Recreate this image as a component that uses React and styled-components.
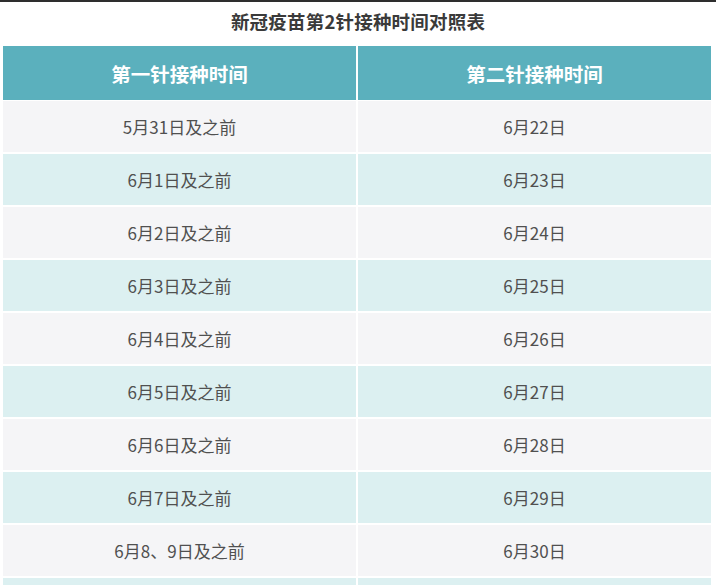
import React from "react";
import styled, { createGlobalStyle } from "styled-components";

const Global = createGlobalStyle`
  html, body { margin: 0; padding: 0; background: #ffffff; }
  body { font-family: "Noto Sans CJK SC", "Noto Sans", sans-serif; }
`;

const Page = styled.div`
  width: 716px;
  height: 585px;
  overflow: hidden;
  background: #ffffff;
  display: flex;
  flex-direction: column;
`;

const TopBar = styled.div`
  height: 2px;
  background: #2e2e2e;
  flex: none;
`;

const Title = styled.h1`
  margin: 0;
  height: 38px;
  padding-bottom: 6px;
  flex: none;
  display: flex;
  align-items: center;
  justify-content: center;
  font-size: 18.5px;
  font-weight: 700;
  color: #3a3a3a;
  letter-spacing: 0.2px;
`;

const Table = styled.div`
  margin: 0 5px 0 3px;
  display: grid;
  grid-template-columns: 1fr 1fr;
  column-gap: 2px;
  row-gap: 2px;
`;

const HeadCell = styled.div`
  height: 54px;
  background: #5bb0bd;
  color: #ffffff;
  font-size: 19.5px;
  font-weight: 700;
  display: flex;
  align-items: center;
  justify-content: center;
  margin-bottom: -1px;
`;

const Cell = styled.div`
  height: 51px;
  background: ${(p) => (p.$alt ? "#dcf0f1" : "#f5f5f7")};
  color: #505050;
  font-size: 17px;
  display: flex;
  align-items: center;
  justify-content: center;
`;

const rows = [
  ["5月31日及之前", "6月22日"],
  ["6月1日及之前", "6月23日"],
  ["6月2日及之前", "6月24日"],
  ["6月3日及之前", "6月25日"],
  ["6月4日及之前", "6月26日"],
  ["6月5日及之前", "6月27日"],
  ["6月6日及之前", "6月28日"],
  ["6月7日及之前", "6月29日"],
  ["6月8、9日及之前", "6月30日"],
  ["", ""],
];

export default function App() {
  return (
    <>
      <Global />
      <Page>
        <TopBar />
        <Title>新冠疫苗第2针接种时间对照表</Title>
        <Table>
          <HeadCell>第一针接种时间</HeadCell>
          <HeadCell>第二针接种时间</HeadCell>
          {rows.map((r, i) => (
            <React.Fragment key={i}>
              <Cell $alt={i % 2 === 1}>{r[0]}</Cell>
              <Cell $alt={i % 2 === 1}>{r[1]}</Cell>
            </React.Fragment>
          ))}
        </Table>
      </Page>
    </>
  );
}
